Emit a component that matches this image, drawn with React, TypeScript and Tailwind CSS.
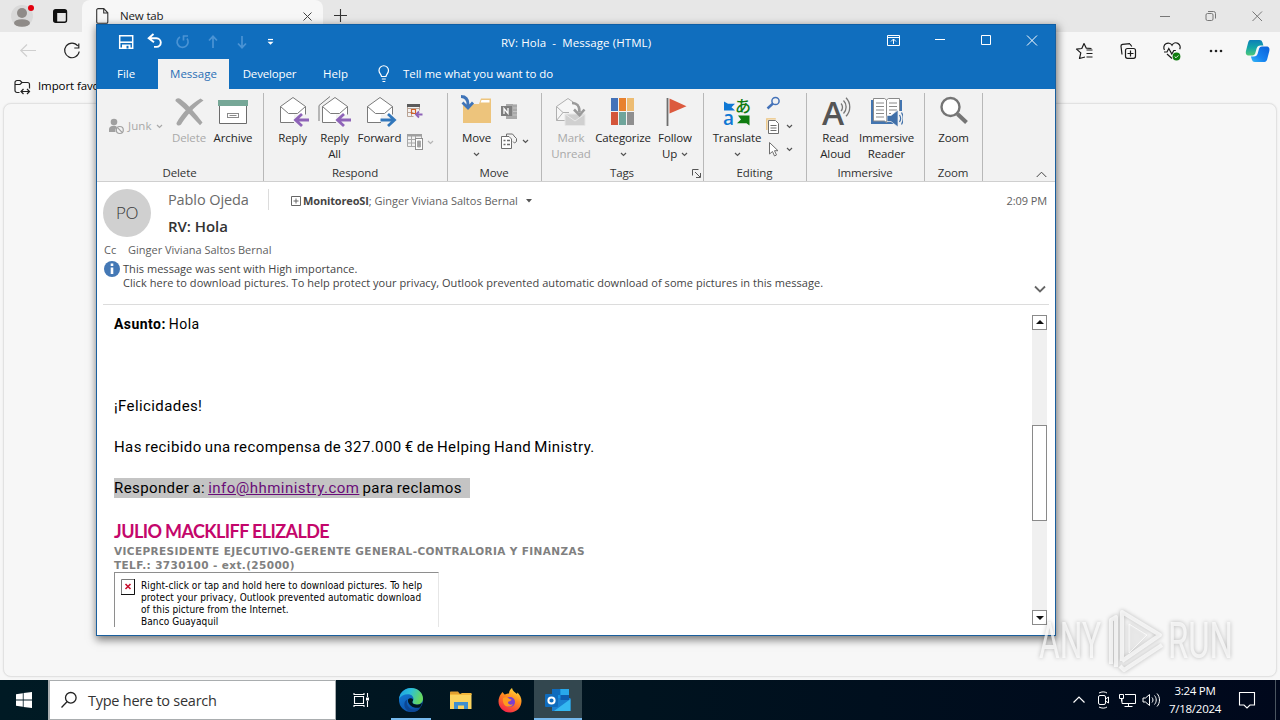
import type { ReactNode } from "react";

const UI = "font-['Open_Sans','Noto_Sans',sans-serif]";

function Chevron({ className = "" }: { className?: string }) {
  return (
    <svg width="7" height="5" viewBox="0 0 7 5" className={className} fill="none" stroke="currentColor" strokeWidth="1.2">
      <path d="M1 1l2.5 2.4L6 1" />
    </svg>
  );
}

/* ---------- Browser ---------- */

function Browser() {
  return (
    <div className="flex h-[680px] flex-col bg-[#f7f7f7] text-[#1b1b1b]">
      <div className="flex h-8 shrink-0 bg-[#e7e7e7]">
        <div className="flex w-[82px] items-center rounded-br-lg">
          <svg width="82" height="32" viewBox="0 0 82 32">
            <circle cx="22" cy="16" r="11" fill="#d9d9d9" />
            <circle cx="22" cy="13" r="5" fill="#8f8b88" />
            <ellipse cx="22" cy="23" rx="8" ry="3.8" fill="#8f8b88" />
            <circle cx="31" cy="8" r="3" fill="#e3000f" />
            <rect x="53.7" y="9.7" width="12.8" height="12.6" rx="2" fill="none" stroke="#111" strokeWidth="1.4" />
            <path d="M54 10h12v3H54zM54 12h3.200v10H54z" fill="#111" />
          </svg>
        </div>
        <div className="flex w-[241px] items-center rounded-t-lg bg-[#f7f7f7] pl-[14px]">
          <svg width="13" height="16" viewBox="0 0 13 16" fill="none" stroke="#333" strokeWidth="1.1">
            <path d="M2 .6h5.800l4 4.200V14a1.300 1.300 0 0 1-1.300 1.300H2A1.300 1.300 0 0 1 .7 14V2A1.300 1.300 0 0 1 2 .7zM7.700.8V5h4" />
          </svg>
          <span className="ml-[11px] w-[182px] text-[11.5px] tracking-[-0.15px]">New tab</span>
          <svg width="11" height="11" viewBox="0 0 11 11" stroke="#444" fill="none">
            <path d="M1.500 1.500l8 8M9.500 1.500l-8 8" />
          </svg>
        </div>
        <svg width="34" height="32" viewBox="0 0 34 32" stroke="#333" fill="none" strokeWidth="1.1">
          <path d="M17.500 9v13M11 15.500h13" />
        </svg>
        <svg width="138" height="32" viewBox="0 0 138 32" stroke="#777" fill="none" className="ml-auto">
          <path d="M18 16.500h10M110.500 11.500l9.500 9.500M120 11.500l-9.500 9.500" />
          <rect x="64" y="13.500" width="7" height="7" rx="1.500" />
          <path d="M66 11.500h5.500a2 2 0 0 1 2 2v5" />
        </svg>
      </div>
      <div className="flex h-[38px] shrink-0 justify-between">
        <svg width="90" height="38" viewBox="0 0 90 38" fill="none" strokeWidth="1.2">
          <path d="M36 18.500H21M27 12.500l-6.200 6 6.200 6" stroke="#cfcfcf" />
          <path d="M77.800 14a7.300 7.300 0 1 0 1.400 5.500M78.800 11.500v4.500h-4.500" stroke="#222" />
        </svg>
        <svg width="210" height="38" viewBox="0 0 210 38" fill="none" stroke="#1b1b1b" strokeWidth="1.200">
          <path d="M24 25l-5.500 1.500 1.300-5.600-4.300-3.800 5.300-.6L23 11.500l2.300 4.700 5.200.3M25.500 18h6M25.500 21.500h6M25.500 25h6" transform="translate(-9 0)" strokeLinejoin="round" />
          <path d="M52 22.500l-1-8.200a1.800 1.800 0 0 1 1.500-2l7.500-.6M60 12l1.800 2.500" />
          <rect x="55.500" y="16.500" width="10" height="9.800" rx="2" />
          <path d="M60.500 18.500v6M57.500 21.500h6" />
          <path d="M94.500 18a4.200 4.200 0 0 1 7.500-4.800 4.200 4.200 0 0 1 7.700 4M94 20h3l1.800-3.500 3 5.500 2-3.500h2M97 22l5 4.500" />
          <circle cx="106.500" cy="24.500" r="3.900" fill="#107c10" stroke="none" />
          <path d="M104.700 24.600l1.300 1.200 2.400-2.400" stroke="#fff" strokeWidth=".9" />
          <g fill="#222" stroke="none">
            <circle cx="141" cy="19" r="1.300" />
            <circle cx="146" cy="19" r="1.300" />
            <circle cx="151" cy="19" r="1.300" />
          </g>
          <defs>
            <linearGradient id="cpA" x1="0" y1="0" x2="0" y2="1">
              <stop offset="0" stopColor="#0d7fb8" />
              <stop offset=".5" stopColor="#13a6a8" />
              <stop offset="1" stopColor="#50c878" />
            </linearGradient>
            <linearGradient id="cpB" x1="1" y1="0" x2="0" y2="1">
              <stop offset="0" stopColor="#0a5fd8" />
              <stop offset=".6" stopColor="#1683f0" />
              <stop offset="1" stopColor="#35b9f5" />
            </linearGradient>
          </defs>
          <path d="M180 8h9.500a3 3 0 0 1 2.900 2.200l1 3.300h-2.900a4 4 0 0 0-3.900 3l-1.400 5a3 3 0 0 1-2.900 2h-3.200c-3 0-3.800-2-3-5l1.800-7c.5-2 1.300-3.500 2.100-3.500z" fill="url(#cpA)" stroke="none" />
          <path d="M194.300 30h-9.500a3 3 0 0 1-2.900-2.200l-1-3.300h2.900a4 4 0 0 0 3.900-3l1.400-5a3 3 0 0 1 2.900-2h4.200c3 0 3.800 2 3 5l-1.800 7c-.5 2-1.300 3.500-3.100 3.500z" fill="url(#cpB)" stroke="none" />
        </svg>
      </div>
      <div className="flex h-[33px] shrink-0 items-center pl-[14px]">
        <svg width="17" height="16" viewBox="0 0 17 16" fill="none" stroke="#222" strokeWidth="1.200">
          <path d="M5.500 13.500H3a2 2 0 0 1-2-2v-8a2 2 0 0 1 2-2h3l2 2h5.500a2 2 0 0 1 2 2v4M1 5.500h5l2-2M7 12.500h8.500M9.500 10L7 12.500 9.500 15M13 10l2.500 2.500L13 15" />
        </svg>
        <span className="-mt-px ml-[7px] text-[11.5px] tracking-[-0.1px] text-black">Import favorites</span>
      </div>
      <div className="mx-[3px] h-[574px] rounded-lg border border-[#e2e2e2] bg-[#f7f7f7] shadow-[0_0_2px_rgba(0,0,0,0.08)]" />
    </div>
  );
}

/* ---------- Ribbon ---------- */

function Group({ label, width, children, extra }: { label: string; width: string; children: ReactNode; extra?: ReactNode }) {
  return (
    <div className={`flex h-[88px] flex-col border-r border-[#b8b8b8] ${width}`}>
      <div className="flex h-[72px]">{children}</div>
      <div className="relative flex h-4 items-center justify-center pr-px leading-4 text-[#333]">
        {label}
        {extra}
      </div>
    </div>
  );
}

function Big({ icon, lines, width, arrow, off }: { icon: ReactNode; lines: string[]; width: string; arrow?: "below" | "inline"; off?: boolean }) {
  return (
    <div className={`flex shrink-0 flex-col items-center ${width} ${off ? "text-[#a9a9a9]" : "text-[#262626]"}`}>
      <div className="flex h-[37px] items-center justify-center">{icon}</div>
      {lines.map((l, i) => (
        <div key={l} className="flex h-4 items-center whitespace-nowrap leading-4">
          {l}
          {arrow === "inline" && i === lines.length - 1 && <Chevron className="ml-1 text-[#555]" />}
        </div>
      ))}
      {arrow === "below" && (
        <div className="flex h-4 items-center">
          <Chevron className="text-[#555]" />
        </div>
      )}
    </div>
  );
}

function Envelope({ arrow, double, color }: { arrow: "left" | "right"; double?: boolean; color: string }) {
  return (
    <svg width="34" height="34" viewBox="0 0 34 34" fill="none">
      {double && <path d="M1 27V11.500L12 2.500" stroke="#7a7a7a" transform="translate(0 -1)" />}
      <path d="M4.500 11.500L17 2.500l12.500 9v16h-25z" fill="#fff" stroke="#7a7a7a" />
      <path d="M4.500 11.500l8 7h9l8-7" stroke="#7a7a7a" />
      {arrow === "left" ? (
        <g>
          <path d="M18 19.500h16v13H18z" fill="#f2f2f2" />
          <path d="M33 25H20M26 19l-6.500 6 6.500 6" stroke={color} strokeWidth="2.800" />
        </g>
      ) : (
        <g>
          <path d="M18 19.500h16v13H18z" fill="#f2f2f2" />
          <path d="M17.500 25h13.500M25 19l6.500 6-6.500 6" stroke={color} strokeWidth="2.800" />
        </g>
      )}
    </svg>
  );
}

function Ribbon() {
  return (
    <div className="relative flex h-[93px] shrink-0 border-b border-[#cfcfcf] bg-[#f2f2f2] pt-1 tracking-[-0.12px]">
      <Group label="Delete" width="w-[167px]">
        <div className="flex h-[66px] w-[71px] items-center pl-[11px] text-[#a9a9a9]">
          <svg width="17" height="17" viewBox="0 0 17 17">
            <circle cx="6" cy="4" r="3.300" fill="#a0a0a0" />
            <path d="M1 14V11c0-2 2-3.300 4.500-3.300 1.500 0 2.800.5 3.500 1.300C7.500 10.500 7 12 7.500 14z" fill="#a0a0a0" />
            <circle cx="11.800" cy="12" r="3.500" fill="none" stroke="#a0a0a0" strokeWidth="1.200" />
            <path d="M9.500 9.700l4.600 4.600" stroke="#a0a0a0" strokeWidth="1.200" />
          </svg>
          <span className="ml-[3px] tracking-[0.1px]">Junk</span>
          <Chevron className="ml-1" />
        </div>
        <Big width="w-[42px]" off lines={["Delete"]} icon={
          <svg width="30" height="30" viewBox="0 0 30 30" fill="#a6a6a6">
            <path d="M1.500 4C1 1.500 4.500.5 6.500 2c8 6 15 14 22 23.500l-2.500 2.800C18.500 20 11 12 1.500 4z" />
            <path d="M29.500 3.500C20 10 13 18 7 27.500c-1.500 2-5 1-4.500-1.500C8 16 17 7 26.500 1.500z" />
          </svg>
        } />
        <Big width="w-[46px]" lines={["Archive"]} icon={
          <svg width="30" height="26" viewBox="0 0 30 26">
            <path d="M1.500 6h27v18.500h-27z" fill="#fff" stroke="#6b6b6b" />
            <path d="M0 1h30v6H0z" fill="#76a797" />
            <rect x="9.500" y="14.500" width="11" height="4" fill="#fff" stroke="#8a8a8a" />
            <path d="M11.500 16.500h7" stroke="#8a8a8a" />
          </svg>
        } />
      </Group>
      <Group label="Respond" width="w-[184px]">
        <div className="w-2" />
        <Big width="w-[41px]" lines={["Reply"]} icon={<Envelope arrow="left" color="#8e63b8" />} />
        <Big width="w-[43px]" lines={["Reply", "All"]} icon={<Envelope arrow="left" double color="#8e63b8" />} />
        <Big width="w-[47px]" lines={["Forward"]} icon={<Envelope arrow="right" color="#3277bb" />} />
        <div className="flex flex-col pl-[4px] pt-[10px]">
          <svg width="17" height="17" viewBox="0 0 17 17" fill="none" stroke="#8a8a8a">
            <path d="M.5 13.500V2.500h12v5M.5 5.500h12M.5 9.500h6M.5 13.500h6M4.500 5v9M8.500 5v3" stroke="#b9a394" />
            <path d="M0 1h13v3H0z" fill="#5b5b5b" stroke="none" />
            <path d="M4.500 6.500h4v4h-4z" stroke="#d2622a" strokeWidth="1.200" />
            <path d="M15.500 11.500H9M12 8.500l-3 3 3 3" stroke="#8e63b8" strokeWidth="1.800" />
          </svg>
          <div className="mt-[13px] flex items-center">
            <svg width="17" height="18" viewBox="0 0 17 18" fill="none" stroke="#a8a8a8">
              <path d="M.5 13.500V2.500h14v3M.5 6.500h8M.5 10h8M.5 13.500h8M4.500 3v10M8.500 3v3" />
              <path d="M0 1h15v2.500H0z" fill="#a0a0a0" stroke="none" />
              <rect x="8.500" y="5.500" width="7" height="11" fill="#fff" stroke="#8f8f8f" />
              <path d="M10.500 8h3v6h-3z" fill="#a0a0a0" />
            </svg>
            <Chevron className="ml-[3px] text-[#b5b5b5]" />
          </div>
        </div>
      </Group>
      <Group label="Move" width="w-[94px]">
        <div className="w-2" />
        <Big width="w-[41px]" arrow="below" lines={["Move"]} icon={
          <svg width="32" height="32" viewBox="0 0 32 32" fill="none" className="-mt-[3px]">
            <path d="M2 10h16l2-5.500h10v24.500H2z" fill="#edc47c" />
            <path d="M20.500 6h8v2.500h-9z" fill="#fff" />
            <path d="M0 2.500c5 0 7 2.500 7 8V13" stroke="#3f74b8" strokeWidth="3" />
            <path d="M1.500 8.500l5.500 5.500 5-5.500" stroke="#3f74b8" strokeWidth="2.800" />
          </svg>
        } />
        <div className="flex flex-col pl-[4px] pt-[10px]">
          <svg width="17" height="17" viewBox="0 0 17 17">
            <path d="M5 1h11v15H5z" fill="#a9a9a9" />
            <path d="M12 1.500h4M12 5h4M12 8.500h4M12 12h4" stroke="#c4c4c4" />
            <path d="M0 3h11v10H0z" fill="#7e7e7e" />
            <path d="M3 11V5.500l4 5V5" stroke="#fff" strokeWidth="1.300" fill="none" />
          </svg>
          <div className="mt-[13px] flex items-center">
            <svg width="17" height="17" viewBox="0 0 17 17" fill="none" stroke="#6e6e6e">
              <path d="M5.500 3.500v-2.500h6l2 2.500M13 3l2.500 2.500v3l-2 1.500-1.500-1.500" />
              <path d="M.5 3.500h7.500l2.500 2.500v9.500H.5z" fill="#fff" />
              <path d="M2.500 7.500h2M6 7.500h3M2.500 11.500h2M6 11.500h3" strokeWidth="1.400" />
            </svg>
            <Chevron className="ml-1 text-[#555]" />
          </div>
        </div>
      </Group>
      <Group
        label="Tags"
        width="w-[162px]"
        extra={
          <svg width="9" height="9" viewBox="0 0 9 9" fill="none" stroke="#555" className="absolute right-[2px] top-1">
            <path d="M.5 6.500v-6h6M3 3l5 5M8.500 4v4.500H4" />
          </svg>
        }
      >
        <div className="w-2" />
        <Big width="w-[42px]" off lines={["Mark", "Unread"]} icon={
          <svg width="30" height="30" viewBox="0 0 30 30" fill="none">
            <path d="M.5 9.500L12 1.500l11.500 8v14H.5z" fill="#f6f6f6" stroke="#b0b0b0" />
            <path d="M.5 9.500l6.500 6M.5 23.500l6.500-8h6" stroke="#b0b0b0" />
            <path d="M9 17h20v11.500H9z" fill="#d0d0d0" stroke="#e6e6e6" />
            <path d="M9 17l10 7 10-7" stroke="#e9e9e9" />
            <path d="M16 6c5.500 0 7.500 2.500 7.500 9M18 12.500l5.500 5.500 5-5.500" stroke="#9a9a9a" strokeWidth="2.600" />
          </svg>
        } />
        <Big width="w-[62px]" arrow="below" lines={["Categorize"]} icon={
          <svg width="24" height="28" viewBox="0 0 24 28">
            <path d="M0 0h7v13H0z" fill="#4472b8" />
            <path d="M8 0h7v13H8z" fill="#e8812e" />
            <path d="M16 0h7v13h-7z" fill="#edbc72" />
            <path d="M0 14h7v13H0z" fill="#d4553a" />
            <path d="M8 14h7v13H8z" fill="#6fa59b" />
            <path d="M16 14h7v13h-7z" fill="#8f8f8f" />
          </svg>
        } />
        <Big width="w-[42px]" arrow="inline" lines={["Follow", "Up"]} icon={
          <svg width="22" height="30" viewBox="0 0 22 30" className="ml-1">
            <path d="M1.500 1v28" stroke="#6e6e6e" strokeWidth="1.800" />
            <path d="M3.500 1.500l17 7.700-17 7.300z" fill="#dc5a3e" />
          </svg>
        } />
      </Group>
      <Group label="Editing" width="w-[103px]">
        <div className="w-2" />
        <Big width="w-[50px]" arrow="below" lines={["Translate"]} icon={
          <svg width="28" height="30" viewBox="0 0 28 30" className="overflow-visible">
            <text x="12" y="14.500" fontSize="16" fontWeight="500" fill="#107c10" fontFamily="Noto Sans CJK JP">あ</text>
            <text x="0" y="28" fontSize="19" fontWeight="600" fill="#0f78d4" fontFamily="Open Sans">a</text>
            <path d="M1 4.500l4 2.300h7l-3.500 3.400 3.500 3.300H1z" fill="#0f78d4" />
            <path d="M15 18.500h11.500v10l-3-2.300H14l4-3.700z" fill="#107c10" />
          </svg>
        } />
        <div className="flex flex-col pl-[4px] text-[#555]">
          <svg width="15" height="21" viewBox="0 0 15 21" fill="none" stroke="#4472b8">
            <circle cx="9.500" cy="8" r="3.600" strokeWidth="1.500" />
            <path d="M7 10.500L1.500 15.500" strokeWidth="2.400" />
          </svg>
          <div className="flex h-[23px] items-center pt-px">
            <svg width="15" height="17" viewBox="0 0 15 17" fill="none" stroke="#6e6e6e">
              <path d="M.8 12V.8h9" stroke="#edc47c" strokeWidth="1.300" />
              <path d="M2.500 2.500h7l3 3v10h-10z" fill="#fff" />
              <path d="M4.500 7.500h6M4.500 10h6M4.500 12.500h6" />
            </svg>
            <Chevron className="ml-[5px]" />
          </div>
          <div className="flex h-[23px] items-center pt-px">
            <svg width="15" height="17" viewBox="0 0 15 17" fill="none" stroke="#6e6e6e">
              <path d="M3.500 1.500v11.500l3-2.500 2 4.500 2-1-2-4.300h3.500z" fill="#fff" />
            </svg>
            <Chevron className="ml-[5px]" />
          </div>
        </div>
      </Group>
      <Group label="Immersive" width="w-[118px]">
        <div className="w-2" />
        <Big width="w-[41px]" lines={["Read", "Aloud"]} icon={
          <svg width="28" height="30" viewBox="0 0 28 30" fill="none" className="overflow-visible">
            <text x="0" y="28" fontSize="32" fontWeight="600" fill="#555" fontFamily="Open Sans" textLength="22" lengthAdjust="spacingAndGlyphs">A</text>
            <path d="M19 6.500c2 2 2 5.500 0 7.500M21.500 3.500c3.500 3.500 3.500 9.500 0 13M24 .8c5 5 5 13.500 0 18.500" stroke="#777" strokeWidth="1.300" />
          </svg>
        } />
        <Big width="w-[61px]" lines={["Immersive", "Reader"]} icon={
          <svg width="32" height="30" viewBox="0 0 32 30" fill="none">
            <path d="M0 3h31v24H0z" fill="#4375b0" />
            <path d="M2.500 1.500h11l2 1.500 2-1.500h11V24h-11l-2 1.500-2-1.500h-11z" fill="#fff" stroke="#8a8a8a" />
            <path d="M15.500 3v22M5 6h8M5 9.500h8M5 13h8M5 16.500h8M5 20h8M18 6h8M18 9.500h8M18 13h8M18 16.500h2" stroke="#8a8a8a" />
            <path d="M24 14h7v14h-7z" fill="#f2f2f2" />
            <path d="M16 18.500h4l7-5.500v17l-7-5.500h-4z" fill="#3f6fa8" stroke="#f2f2f2" strokeWidth=".7" />
            <path d="M28.500 18c1.300 2 1.300 5 0 7M30.500 15.500c2 3.500 2 8.500 0 12" stroke="#3f6fa8" strokeWidth="1.200" />
          </svg>
        } />
      </Group>
      <Group label="Zoom" width="w-[58px]">
        <div className="w-2" />
        <Big width="w-[41px]" lines={["Zoom"]} icon={
          <svg width="28" height="32" viewBox="0 0 28 32" fill="none" className="-mt-[2px]">
            <circle cx="10.500" cy="12" r="9" fill="#fff" stroke="#757575" strokeWidth="2.400" />
            <path d="M17.500 19l9 8.500" stroke="#757575" strokeWidth="4" />
          </svg>
        } />
      </Group>
      <svg width="11" height="7" viewBox="0 0 11 7" fill="none" stroke="#444" className="mb-[3px] ml-auto mr-[8px] self-end">
        <path d="M.7 6l4.800-4.800L10.300 6" />
      </svg>
    </div>
  );
}

/* ---------- Message window ---------- */

function TitleBar() {
  return (
    <div className="flex h-[35px] shrink-0 bg-[#106ebe] text-white">
      <svg width="190" height="35" viewBox="0 0 190 35" fill="none">
        <path d="M22.700 11.700h13v12.600h-13z" stroke="#fff" strokeWidth="1.500" />
        <path d="M22.500 18.200h13" stroke="#fff" strokeWidth="1.600" />
        <path d="M25 20.500h8.500v4H25z" fill="#fff" />
        <path d="M29.500 21.800h2v2.700h-2z" fill="#106ebe" />
        <path d="M56.500 10l-4.800 4.300 5.300 4M52 14.300h7.500a4.300 4.300 0 0 1 0 8.600H57" stroke="#fff" strokeWidth="1.900" />
        <g stroke="#4a93d4" strokeWidth="1.700">
          <path d="M83 13a5.500 5.500 0 1 0 7 1.500M86.500 11.500v5M86 12h5" />
          <path d="M116 24V12.500M112 16.500l4-4.200 4 4.200" />
          <path d="M145 12v11.500M141 19.500l4 4.200 4-4.200" />
        </g>
        <path d="M171 15.500h5" stroke="#fff" strokeWidth="1.200" />
        <path d="M170.500 17.800h6l-3 3z" fill="#fff" />
      </svg>
      <div className="w-[578px] whitespace-pre pt-px text-center leading-[36px] tracking-[0.08px]">RV: Hola  -  Message (HTML)</div>
      <svg width="190" height="35" viewBox="0 0 190 35" fill="none" stroke="#fff" className="ml-auto">
        <path d="M22.500 11.500h12v10h-12zM22.500 13.500h12M28.500 20v-5M26 17.500l2.500-2.500 2.500 2.500" />
        <path d="M70 15.500h10" />
        <path d="M116.500 11.500h9v9h-9z" />
        <path d="M162 11.500l10 10M172 11.500l-10 10" />
      </svg>
    </div>
  );
}

function TabRow() {
  return (
    <div className="flex h-[30px] shrink-0 items-stretch bg-[#106ebe] leading-[30px] text-white">
      <span className="w-[61px] pl-5">File</span>
      <span className="w-[71px] bg-[#f2f2f2] text-center text-[#2a6fb5]">Message</span>
      <span className="w-[81px] text-center tracking-[-0.15px]">Developer</span>
      <span className="w-[51px] text-center">Help</span>
      <svg width="45" height="30" viewBox="0 0 45 30" fill="none" stroke="#fff" strokeWidth="1.200">
        <path d="M20.500 17.500c0-2-2.500-3-2.500-6a4.500 4.500 0 0 1 9.500 0c0 3-2.500 4-2.500 6zM20.800 20h4M21.500 22.500h2.800" />
      </svg>
      <span className="-ml-[3px] tracking-[-0.04px]">Tell me what you want to do</span>
    </div>
  );
}

function Header() {
  return (
    <div className="relative flex h-[123px] shrink-0 flex-col pl-[6px] pr-[6px] text-[11px] text-[#5f5f5f]">
      <div className="flex h-[60px] pt-[7px]">
        <div className="flex size-12 items-center justify-center rounded-full bg-[#d0d0d0] text-[17px] font-light tracking-[-0.4px] text-[#3a3a3a]">PO</div>
        <div className="ml-[17px] flex w-[100px] flex-col">
          <span className="h-[22px] text-[14.5px] leading-[22px] tracking-[-0.1px] text-[#6a6a6a]">Pablo Ojeda</span>
          <span className="h-[26px] whitespace-nowrap text-[15px] font-semibold leading-[30px] tracking-[-0.05px] text-[#333]">RV: Hola</span>
        </div>
        <div className="h-[21px] w-px bg-[#dcdcdc]" />
        <div className="ml-[22px] flex h-[24px] items-center whitespace-nowrap">
          <svg width="10" height="10" viewBox="0 0 10 10" fill="none" stroke="#666">
            <path d="M.5.500h9v9h-9zM5 2.500v5M2.500 5h5" />
          </svg>
          <span className="ml-[2px] font-bold tracking-[-0.15px] text-[#444]">MonitoreoSI</span>
          <span>; Ginger Viviana Saltos Bernal</span>
          <svg width="6" height="4" viewBox="0 0 6 4" className="ml-2">
            <path d="M0 0h6L3 3.500z" fill="#555" />
          </svg>
        </div>
        <span className="ml-auto mr-[2px] h-[24px] leading-[24px] tracking-[-0.1px]">2:09 PM</span>
      </div>
      <div className="flex h-4 items-center leading-4">
        <span className="w-[25px] pl-px">Cc</span>
        <span>Ginger Viviana Saltos Bernal</span>
      </div>
      <div className="flex h-[35px] text-[#444]">
        <svg width="18" height="18" viewBox="0 0 18 18" className="mt-[2px]">
          <circle cx="9" cy="9" r="8" fill="#4478b5" />
          <path d="M7.700 7.500h2.600V14H7.700zM7.700 3.500h2.600V6H7.700z" fill="#fff" />
        </svg>
        <div className="ml-[2px] flex flex-col whitespace-nowrap pt-[4px] leading-[14px] tracking-[0.045px]">
          <span>This message was sent with High importance.</span>
          <span>Click here to download pictures. To help protect your privacy, Outlook prevented automatic download of some pictures in this message.</span>
        </div>
        <svg width="12" height="8" viewBox="0 0 12 8" fill="none" stroke="#666" strokeWidth="1.800" className="ml-auto mr-[3px] mt-[27px] shrink-0">
          <path d="M1 1.500l5 5 5-5" />
        </svg>
      </div>
      <div className="mt-auto h-px bg-[#dcdcdc]" />
    </div>
  );
}

function MessageBody() {
  return (
    <div className="flex h-[322px] overflow-hidden pl-[17px] text-black">
      <div className="w-[918px] pt-[9px] font-['Roboto','Liberation_Sans',sans-serif] text-[15px] tracking-[0.4px] [word-spacing:-1px]">
        <div className="h-[82px] text-[14px] leading-5 tracking-[0.45px]"><b>Asunto:</b> Hola</div>
        <div className="h-[41px] leading-5">¡Felicidades!</div>
        <div className="h-[41px] whitespace-nowrap leading-5">Has recibido una recompensa de 327.000 € de Helping Hand Ministry.</div>
        <div className="flex h-[44px]">
          <span className="h-5 w-[356px] whitespace-nowrap bg-[#c4c4c4] leading-5">
            Responder a: <a className="tracking-[0.48px] text-[#6a0d78] underline">info@hhministry.com</a> para reclamos
          </span>
        </div>
        <div className="h-[22px] font-['Lato','Open_Sans',sans-serif] text-[18px] font-bold leading-[19px] tracking-[-0.6px] text-[#c4066b] [word-spacing:0px]">JULIO MACKLIFF ELIZALDE</div>
        <div className="flex h-[28px] flex-col whitespace-nowrap font-['DejaVu_Sans',sans-serif] text-[10.5px] font-bold leading-[14px] tracking-[0.38px] text-[#808080] [word-spacing:0px]">
          <span>VICEPRESIDENTE EJECUTIVO-GERENTE GENERAL-CONTRALORIA Y FINANZAS</span>
          <span>TELF.: 3730100 - ext.(25000)</span>
        </div>
        <div className="flex h-[55px] w-[325px] overflow-hidden border-l border-r border-t border-l-[#8e8e8e] border-r-[#e6e6e6] border-t-[#8e8e8e] pl-[6px] pt-[6px]">
          <svg width="14" height="16" viewBox="0 0 14 16" className="shrink-0">
            <path d="M.5.500h13v15H.5z" fill="#fff" stroke="#7a7a7a" />
            <path d="M13.500 0v15.500H0" fill="none" stroke="#111" />
            <path d="M4.500 5l5 5M9.500 5l-5 5" stroke="#c8102e" strokeWidth="1.600" />
          </svg>
          <div className="ml-[6px] flex shrink-0 flex-col whitespace-nowrap pt-px font-['DejaVu_Sans_Condensed','DejaVu_Sans',sans-serif] text-[10px] leading-[12px] tracking-[0.08px] [word-spacing:0px]">
            <span>Right-click or tap and hold here to download pictures. To help</span>
            <span>protect your privacy, Outlook prevented automatic download</span>
            <span>of this picture from the Internet.</span>
            <span>Banco Guayaquil</span>
          </div>
        </div>
      </div>
      <div className="mt-[10px] flex h-[310px] w-[15px] flex-col bg-[#f0f0f0]">
        <div className="flex h-[15px] items-center justify-center border border-[#8a8a8a] bg-white pb-px">
          <svg width="8" height="4" viewBox="0 0 8 4"><path d="M0 4l4-4 4 4z" fill="#111" /></svg>
        </div>
        <div className="mt-[95px] h-[96px] border border-[#8a8a8a] bg-white" />
        <div className="mt-auto flex h-[15px] items-center justify-center border border-[#8a8a8a] bg-white">
          <svg width="8" height="4" viewBox="0 0 8 4"><path d="M0 0h8L4 4z" fill="#111" /></svg>
        </div>
      </div>
    </div>
  );
}

function MessageWindow() {
  return (
    <div className="absolute left-[96px] top-[24px] flex h-[612px] w-[960px] flex-col overflow-hidden border border-[#1a5f9e] border-t-[#0d5ea6] bg-white text-[11.5px] shadow-[1px_3px_8px_1px_rgba(0,0,0,0.5)]">
      <div className="-mt-px flex flex-col">
        <TitleBar />
        <TabRow />
      </div>
      <Ribbon />
      <Header />
      <MessageBody />
    </div>
  );
}

/* ---------- Taskbar ---------- */

function Taskbar() {
  return (
    <div className="flex h-10 bg-linear-to-r from-[#001a24] via-[#00131f] to-[#00081c]">
      <div className="flex w-12 items-center justify-center">
        <svg width="16" height="16" viewBox="0 0 16 16" fill="#fff">
          <path d="M0 2.200L6.800 1.200V7.600H0zM7.600 1.100L16 0v7.600H7.600zM0 8.400h6.800v6.400L0 13.800zM7.600 8.400H16V16l-8.400-1.100z" />
        </svg>
      </div>
      <div className="flex w-[288px] items-center border border-l-2 border-[#a9adaf] bg-white pl-[10px]">
        <svg width="18" height="18" viewBox="0 0 18 18" fill="none" stroke="#222" strokeWidth="1.300">
          <circle cx="10.800" cy="6.800" r="5.300" />
          <path d="M7 10.800L1.500 16.500" />
        </svg>
        <span className="ml-[10px] pt-[2px] text-[14.500px] tracking-[-0.25px] text-[#333]">Type here to search</span>
      </div>
      <div className="flex w-[50px] items-center justify-center">
        <svg width="17" height="16" viewBox="0 0 17 16" fill="none" stroke="#fff" strokeWidth="1.100">
          <path d="M1.500 4.500h9v7h-9zM1 1v1.500h10V1M1 15v-1.500h10V15M14.500 1v4M14.500 9v6" />
          <path d="M13 5.500h3v3h-3z" fill="#fff" stroke="none" />
        </svg>
      </div>
      <div className="flex w-[50px] flex-col items-center justify-between">
        <svg width="26" height="26" viewBox="0 0 26 26" className="mt-[7px]">
          <defs>
            <linearGradient id="edT" x1="0" y1="0" x2="1" y2=".3">
              <stop offset="0" stopColor="#1b9de2" />
              <stop offset=".5" stopColor="#2cc0d8" />
              <stop offset="1" stopColor="#66d860" />
            </linearGradient>
            <linearGradient id="edB" x1="0" y1="0" x2=".6" y2="1">
              <stop offset="0" stopColor="#1583dc" />
              <stop offset="1" stopColor="#0b4fa8" />
            </linearGradient>
          </defs>
          <circle cx="13" cy="13" r="12" fill="url(#edB)" />
          <path d="M1 12C2 5 7 1 13 1c7 0 12 5 12 10.500 0 4-3 6-6 6-3.500 0-4.500-1.500-4.500-2.500s1-1.300 1-3c0-2.500-2-4.800-5.500-4.800C6 7.200 2.500 9 1 12z" fill="url(#edT)" />
          <path d="M9.500 12.500c-1.500 2.500-.5 8 4.500 9.700 3.500 1.200 7-.2 8.500-1.200-1.500 2.500-5 4.200-9 4-4-.3-8-4-7-9 .4-2 1.500-3 3-3.500z" fill="#0c4794" />
          <path d="M10.200 12.200c1-1.200 3.600-1.300 4.800.2.300 1.500-.7 1.600-.7 2.700 0 1.200 1.200 2.600 4.700 2.600 2 0 4-.7 5-2-.4 2-1.300 3.600-2 4.500-1.500.7-4 1-6.500 0-3.500-1.400-6.500-5-5.300-8z" fill="#001720" />
        </svg>
        <div className="h-[2px] w-10 bg-[#76b9ed]" />
      </div>
      <div className="flex w-[49px] items-center justify-center">
        <svg width="22" height="19" viewBox="0 0 22 19">
          <path d="M0 1.500C0 .8.500.500 1 .500h7l2 2.500H0z" fill="#e0a030" />
          <path d="M0 3h21.500v15H0z" fill="#fbd45f" />
          <path d="M0 3h10l2-1h9.500v2H0z" fill="#f3b73a" />
          <path d="M4 18v-7h14v7h-4v-3.500H8V18z" fill="#3f8fcf" />
        </svg>
      </div>
      <div className="flex w-[49px] items-center justify-center">
        <svg width="24" height="25" viewBox="0 0 24 25">
          <defs>
            <linearGradient id="ff" x1=".8" y1="0" x2=".3" y2="1">
              <stop offset="0" stopColor="#ffe23e" />
              <stop offset=".45" stopColor="#ff8a1e" />
              <stop offset="1" stopColor="#f5214a" />
            </linearGradient>
          </defs>
          <path d="M3 6l1.500-2 2 2.500C8 6 10 5.500 11 5.500 11 3 12.500 1 14 0c.5 3 3 4 5 6l.5-1.500C22 7 23.500 10 23.500 13c0 6.500-5 11.500-11.500 11.500S.5 19.500.5 13.500C.500 10.500 1.500 8 3 6z" fill="url(#ff)" />
          <circle cx="12" cy="14" r="5" fill="#7a3fd0" />
          <path d="M5 10c2-1 4-1 6 .5 1 1 3 .5 2.500 1.500-1 1.500-3 1-3.500 2.500 0 2 3 3 5 1.500-1 3-6 3.500-8.500 1C5 15 4.500 12.500 5 10z" fill="#ff9a20" />
        </svg>
      </div>
      <div className="flex h-10 w-12 flex-col items-center justify-between bg-[#33474f]">
        <svg width="26" height="24" viewBox="0 0 26 24" className="mt-[8px]">
          <path d="M7 1h17v12H7z" fill="#1490df" />
          <path d="M7 1h8.500v6H7z" fill="#0f6cbd" />
          <path d="M15.500 1H24v6h-8.500z" fill="#28a8ea" />
          <path d="M7 10h18.500v13H7z" fill="#1a7fd0" />
          <path d="M25.500 11v12H9l16.500-12z" fill="#35b8f1" />
          <path d="M15.500 7H24v5h-8.500z" fill="#0d5cae" />
          <rect x="0" y="6" width="13" height="13" rx="1" fill="#0f6cbd" />
          <circle cx="6.500" cy="12.500" r="3.100" fill="none" stroke="#fff" strokeWidth="2" />
        </svg>
        <div className="h-[2px] w-12 bg-[#76b9ed]" />
      </div>
      <div className="ml-auto flex text-white">
        <svg width="100" height="40" viewBox="0 0 100 40" fill="none" stroke="#fff">
          <path d="M7.500 22.500l5.500-5.500 5.500 5.500" strokeWidth="1.200" />
          <rect x="32.500" y="15.500" width="7" height="9" rx="1.500" />
          <path d="M39.500 19l3-2v6l-3-2M33 13c2.500-1.500 6-1.500 8 0M33 27c2.500 1.500 6 1.500 8 0" />
          <path d="M59 14.500h10.500v9H56v-5M62.500 23.500v3M58.500 26.500h8M53.500 14.500h4v4h-4zM55.500 18.500v3" />
          <path d="M77 18h2.500l4-3.500v11l-4-3.500H77z" />
          <path d="M86 17.500c1.300 1.500 1.300 3.500 0 5M88.500 15.500c2.300 2.500 2.300 6.500 0 9M91 13.500c3.300 3.500 3.300 9.500 0 13" />
        </svg>
        <div className="flex w-[58px] flex-col items-center pt-[2px] text-[11.500px] leading-[18px] tracking-[-0.250px]">
          <span>3:24 PM</span>
          <span>7/18/2024</span>
        </div>
        <svg width="56" height="40" viewBox="0 0 56 40" fill="none" stroke="#fff">
          <path d="M15.500 12.500h15v12.500h-4.500L23 28l-3-3h-4.500z" strokeWidth="1.100" />
          <path d="M51.500 0v40" stroke="#4a5560" />
        </svg>
      </div>
    </div>
  );
}

function Watermark() {
  return (
    <svg width="204" height="72" viewBox="0 0 204 72" fill="none" className="absolute left-[1034px] top-[604px] drop-shadow-[0_0_2px_rgba(0,0,0,0.35)]">
      <g fill="#fff" fillOpacity=".7" fontFamily="Roboto" fontSize="50" fontWeight="400">
        <text x="5" y="54" textLength="62" lengthAdjust="spacingAndGlyphs">ANY</text>
        <text x="134" y="54" textLength="65" lengthAdjust="spacingAndGlyphs">RUN</text>
      </g>
      <g stroke="#fff" strokeOpacity=".7" strokeWidth="4" strokeLinejoin="round">
        <path d="M77 60V16l5-3v50" />
        <path d="M88 57V8l38 23-38 26" />
        <path d="M95 49V20l18 11z" fill="#fff" fillOpacity=".3" strokeWidth="1" />
        <path d="M86 62l4 4 38-25" />
      </g>
    </svg>
  );
}

export default function App() {
  return (
    <div className={`relative h-[720px] w-[1280px] overflow-hidden ${UI}`}>
      <Browser />
      <Taskbar />
      <MessageWindow />
      <Watermark />
    </div>
  );
}
